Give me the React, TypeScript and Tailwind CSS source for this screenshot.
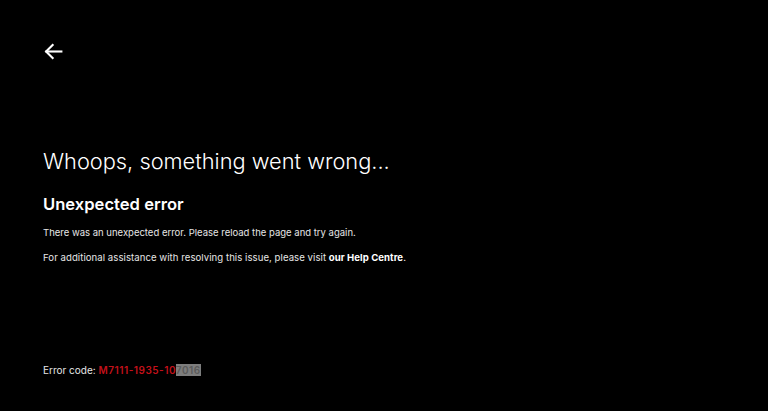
import React from 'react';

export default function App() {
  return (
    <div
      className="w-[768px] h-[411px] bg-black text-white flex flex-col px-[43px] overflow-hidden"
      style={{ fontFamily: 'Inter, "Noto Sans", Arial, sans-serif' }}
    >
      {/* Back */}
      <button className="mt-[41px] w-[21px] h-[21px] text-white" aria-label="Back">
        <svg viewBox="0 0 24 24" width="21" height="21" fill="none" stroke="currentColor" strokeWidth="2.4" strokeLinecap="square">
          <path d="M21 12H4" />
          <path d="M11 4.5 3.5 12 11 19.5" />
        </svg>
      </button>

      {/* Message */}
      <div className="mt-[84px] flex flex-col">
        <h1 className="text-[21.8px] font-light leading-[30px]">Whoops, something went wrong...</h1>
        <h2 className="mt-[17px] text-[16.6px] font-semibold leading-[22px]">Unexpected error</h2>
        <p className="mt-[11px] text-[9.5px] leading-[14px] text-[#e6e6e6]">
          There was an unexpected error. Please reload the page and try again.
        </p>
        <p className="mt-[11px] text-[9.6px] leading-[14px] text-[#e6e6e6] tracking-[0.05px]">
          For additional assistance with resolving this issue, please visit{' '}
          <span className="font-bold text-white">our Help Centre</span>.
        </p>
      </div>

      {/* Error code */}
      <div className="mt-auto mb-[34px] text-[10px] leading-[14px] text-[#e6e6e6]">
        Error code:{' '}
        <span className="font-semibold text-[#c3111a] tracking-[0.5px]">M7111-1935-10</span>
        <span className="font-semibold text-[#5a5a5a] bg-[#7d7d7d] tracking-[0.5px]">7016</span>
      </div>
    </div>
  );
}
